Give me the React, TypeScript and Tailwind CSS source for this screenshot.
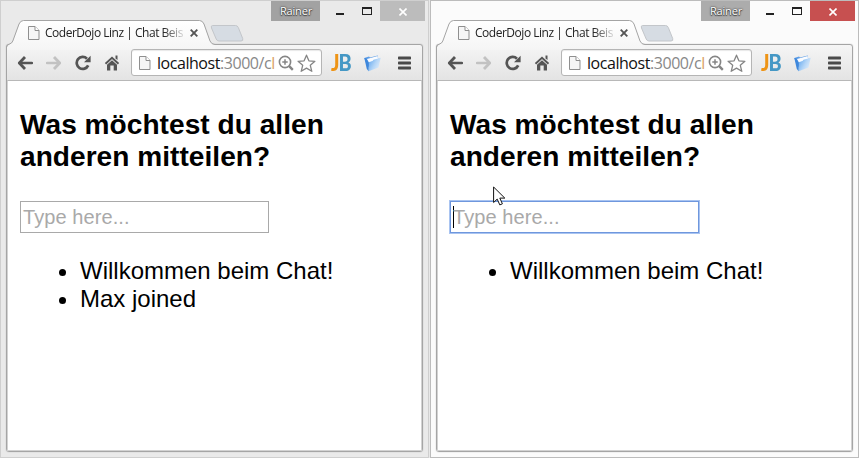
import React from "react";

const uiFont = "font-['Open_Sans','Noto_Sans',sans-serif]";
const pageFont = "font-['Liberation_Sans',Arial,sans-serif]";

function PageIcon({ className }: { className: string }) {
  return (
    <svg className={className} viewBox="0 0 12 16" fill="none" stroke="#8f8f8f">
      <path d="M.5 1.5h6.500l4 4v9H.5z" fill="#f6f6f6" />
      <path d="M7 1.500v4h4" fill="#fff" />
    </svg>
  );
}

function Arrow({ color, flip }: { color: string; flip?: boolean }) {
  return (
    <svg className={`block h-4 w-4 shrink-0 ${flip ? "-scale-x-100" : ""}`} viewBox="0 0 16 16" fill="none" stroke={color} strokeWidth="2.8">
      <path d="M2.500 8H15" strokeLinecap="round" strokeWidth="2.5" />
      <path d="M8 2 2.300 8 8 14" strokeLinejoin="round" />
    </svg>
  );
}

function Reload() {
  return (
    <svg className="ml-[13px] block h-4 w-4 shrink-0" viewBox="0 0 16 16">
      <path d="M13.200 10.400A6 6 0 1 1 12 3.700" fill="none" stroke="#555" strokeWidth="2.7" />
      <path d="M15.600.7v6.500H9z" fill="#555" />
    </svg>
  );
}

function Home() {
  return (
    <svg className="ml-[13px] block h-4 w-4 shrink-0" viewBox="0 0 16 16">
      <path d="M11.500.5h2V5l-2-1.500z" fill="#555" />
      <path d="M1.500 8.700 8 2.700l6.500 6" fill="none" stroke="#555" strokeWidth="1.9" />
      <path d="M8 5.200 13 9.800V15.500H9.700V10.500H6.300v5H3V9.800z" fill="#555" />
    </svg>
  );
}

function Magnifier() {
  return (
    <svg className="block h-4 w-4 shrink-0" viewBox="0 0 16 16" fill="none" stroke="#858585">
      <circle cx="7" cy="7" r="5.6" strokeWidth="1.6" />
      <path d="M7 4.300v5.400M4.300 7h5.400" strokeWidth="1.5" />
      <path d="m11.200 11.200 3.600 3.600" strokeWidth="2.4" />
    </svg>
  );
}

function Star() {
  return (
    <svg className="ml-[3px] block h-[18px] w-[19px] shrink-0" viewBox="0 0 19 18">
      <path d="m9.500 1.200 2.400 5.600 6 .5-4.600 4 1.500 6-5.300-3.200-5.300 3.200 1.500-6-4.600-4 6-.5z" fill="#fff" stroke="#858585" strokeWidth="1.3" strokeLinejoin="round" />
    </svg>
  );
}

function Folder({ id }: { id: string }) {
  return (
    <svg className="ml-[13px] block h-[18px] w-[17px] shrink-0" viewBox="0 0 17 18">
      <defs>
        <linearGradient id={id} x1="0" y1=".2" x2="1" y2=".8">
          <stop offset="0" stopColor="#6aabee" />
          <stop offset=".5" stopColor="#b3d5f7" />
          <stop offset="1" stopColor="#e6f0fb" />
        </linearGradient>
      </defs>
      <path d="M.3 4 5 2.600l1 1L13.800 1.400 14.500 8 4 13z" fill="#5d9de6" />
      <path d="m3 4.900 10.600-3 .6 3.500L4.500 9z" fill="#fafcff" />
      <path d="M4.800 8.200 8.500 7l1-1.300 7.200-1.900L14.500 13.500 4.600 17.300z" fill={`url(#${id})`} />
      <path d="M.3 4 2.200 4.200 4.800 8.200 4.600 17.300 2.800 15z" fill="#3f88dc" />
    </svg>
  );
}

function Caption({ active }: { active: boolean }) {
  return (
    <div className="flex h-[19px] shrink-0 justify-end pr-[3px]">
      <div className={`${uiFont} h-5 w-[49px] pl-px pt-[2px] text-center text-[11px] leading-[16px] tracking-[-0.15px] text-white ${active ? "bg-[#acacac]" : "bg-[#a2a2a2]"} [text-shadow:0_0_2px_#333,0_0_1px_#555,0_1px_1px_#444]`}>
        Rainer
      </div>
      <svg className="block h-5 w-[60px] shrink-0" viewBox="0 0 60 20" shapeRendering="crispEdges">
        <path d="M16 12h8v2h-8z" fill="#222" />
        <path d="M42 6h10v8H42zM43 8v5h8V8z" fill="#222" fillRule="evenodd" />
      </svg>
      <div className={`flex h-5 w-[45px] items-center justify-center ${active ? "bg-[#c75050]" : "bg-[#bcbcbc]"}`}>
        <svg className="mt-px ml-px block h-2 w-2" viewBox="0 0 8 8" stroke="#fff" strokeWidth="1.6">
          <path d="m.5.5 7 7M7.500.5l-7 7" />
        </svg>
      </div>
    </div>
  );
}

function TabStrip({ id }: { id: string }) {
  return (
    <div className="relative z-10 flex h-6 shrink-0 pl-[27px]">
      <svg className="absolute left-[4px] top-0 block h-[60px] w-[245px]" viewBox="5 20 245 60" fill="none">
        <defs>
          <linearGradient id={id} x1="0" y1="20" x2="0" y2="50" gradientUnits="userSpaceOnUse">
            <stop offset="0" stopColor="#fff" />
            <stop offset="1" stopColor="#f5f5f5" />
          </linearGradient>
        </defs>
        <path d="M212.500 25.500h23q2 0 2.800 2l4.400 11q.8 2.500-1.700 2.500h-22q-2 0-2.800-2l-4.700-11q-.8-2.500 1-2.500z" fill="#d6dce3" stroke="#c3c6ca" />
        <path d="M7 50V47q0-2 3-3 2-.5 3-3l6.500-17q1.500-3.500 4-3.500H199q3 0 4.500 3.500L210 41q1.500 3.500 5 3.500V50z" fill={`url(#${id})`} />
        <path d="M6.500 52V47.500q0-2.500 3-3.500 2.300-.5 3.300-3l6.200-17q1.500-3.500 4.500-3.500H199.500q3 0 4.500 3.500L210 41q1.500 3.500 5 3.500" stroke="#a4a4a4" />
      </svg>
      <PageIcon className="relative mt-[5px] block h-4 w-3 shrink-0" />
      <div className={`${uiFont} relative ml-[5px] mt-[5px] h-4 w-[138px] whitespace-nowrap text-[12px] leading-4 tracking-[-0.48px] text-[#222] [mask-image:linear-gradient(to_right,#000_118px,transparent_142px)]`}>
        CoderDojo Linz | Chat Beis
      </div>
      <svg className="relative ml-[7px] mt-[9px] block h-2 w-2 shrink-0" viewBox="0 0 8 8" stroke="#555" strokeWidth="1.9">
        <path d="m.7.7 6.600 6.600M7.300.7.7 7.300" />
      </svg>
    </div>
  );
}

function Toolbar({ id }: { id: string }) {
  return (
    <div className="relative z-20 flex h-[35px] shrink-0 items-center pl-[10px]">
      <Arrow color="#555" />
      <div className="w-[13px] shrink-0" />
      <Arrow color="#c2c2c2" flip />
      <Reload />
      <Home />
      <div className="ml-[11px] flex h-[27px] w-[191px] shrink-0 items-center rounded-[3px] border border-[#b5b5b5] bg-white pl-[7px] shadow-[inset_0_1px_1px_#e8e8e8]">
        <PageIcon className="block h-4 w-3 shrink-0" />
        <div className={`${uiFont} ml-[6px] h-[22px] w-[117px] shrink-0 whitespace-nowrap text-[16px] leading-[22px] tracking-[-0.45px] text-[#111]`}>
          localhost<span className="text-[#888]">:3000/c</span>
          <span className="text-[#d9a066]">l</span>
        </div>
        <div className="w-[4px] shrink-0" />
        <Magnifier />
        <Star />
      </div>
      <div className="ml-[9px] flex h-5 w-5 shrink-0 origin-left scale-x-[.9] font-['Lato',sans-serif] text-[22px] font-black leading-[19px] tracking-[-1.2px]">
        <span className="text-[#ee9416]">J</span>
        <span className="text-[#4598c5]">B</span>
      </div>
      <Folder id={id} />
      <svg className="ml-[17px] block h-[14px] w-[13px] shrink-0" viewBox="0 0 13 14" fill="#4a4a4a">
        <rect y=".5" width="13" height="3" rx=".7" />
        <rect y="5.500" width="13" height="3" rx=".7" />
        <rect y="10.500" width="13" height="3" rx=".7" />
      </svg>
    </div>
  );
}

function Page({ messages, focused }: { messages: string[]; focused: boolean }) {
  return (
    <div className={`${pageFont} relative grow border-x border-b border-t border-[#d2d2d2] border-t-[#b8b8b8] bg-white pl-[12px] text-black`}>
      <h3 className="pt-[28px] text-[28.08px] font-bold leading-8 tracking-[0.03px]">
        Was möchtest du allen
        <br />
        anderen mitteilen?
      </h3>
      <div className={`mt-[28px] flex h-8 w-[249px] items-center border bg-white pl-[2px] text-[20px] tracking-[0.08px] text-[#a9a9a9] ${focused ? "border-[#6f97dd] shadow-[0_0_0_1px_#a9c4f1]" : "border-[#a9a9a9]"}`}>
        {focused && <div className="-mr-px h-[22px] w-px bg-black" />}
        <span>Type here...</span>
      </div>
      <ul className="mt-6 list-disc pl-[60px] text-[24px] leading-7">
        {messages.map((m) => (
          <li key={m}>{m}</li>
        ))}
      </ul>
      {focused && (
        <svg className="absolute left-[55px] top-[105px] block h-[20px] w-[13px]" viewBox="0 0 13 20">
          <path d="M.6 1v15.500l3.600-3.400 2.600 5.800 2.600-1.100-2.600-5.700h5z" fill="#fff" stroke="#111" strokeWidth="1" />
        </svg>
      )}
    </div>
  );
}

function BrowserWindow({ id, messages, active = false }: { id: string; messages: string[]; active?: boolean }) {
  return (
    <div className={`flex h-[458px] w-[429px] shrink-0 flex-col border ${active ? "border-[#bcbcbc] bg-[#fbfbfb]" : "border-[#cfcfcf] bg-[#eaeaea]"}`}>
      <Caption active={active} />
      <TabStrip id={`tab-${id}`} />
      <div className="mx-[5px] flex h-[408px] shrink-0 flex-col rounded-[3px] border border-[#a5a5a5] bg-linear-to-b from-[#f5f5f5] to-[#e3e3e3] to-[36px] shadow-[0_0_1px_#999]">
        <Toolbar id={`folder-${id}`} />
        <Page messages={messages} focused={active} />
      </div>
    </div>
  );
}

export default function App() {
  return (
    <div className="flex h-[458px] w-[859px] gap-px overflow-hidden bg-[#e8e8e8]">
      <BrowserWindow id="left" messages={["Willkommen beim Chat!", "Max joined"]} />
      <BrowserWindow id="right" messages={["Willkommen beim Chat!"]} active />
    </div>
  );
}
